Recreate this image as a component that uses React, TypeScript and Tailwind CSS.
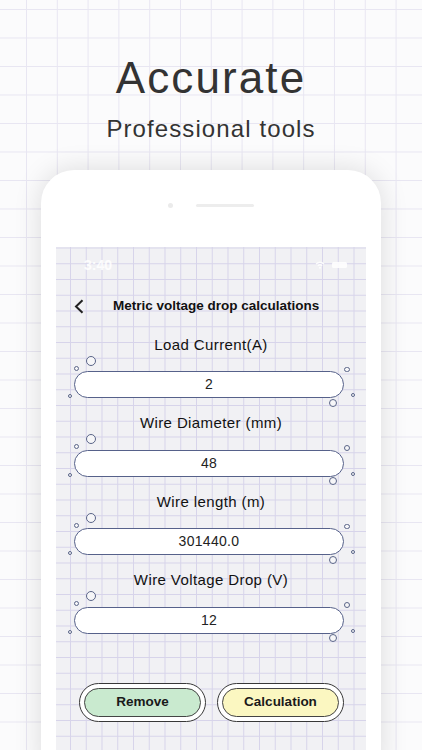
import React from "react";

const fields = [
  { label: "Load Current(A)", value: "2" },
  { label: "Wire Diameter (mm)", value: "48" },
  { label: "Wire length (m)", value: "301440.0" },
  { label: "Wire Voltage Drop (V)", value: "12" },
];

const Bubble = ({ className }: { className: string }) => (
  <span
    className={`absolute rounded-full border border-[#5a6588] bg-[#f6f6f8] ${className}`}
  />
);

const Field = ({ label, value }: { label: string; value: string }) => (
  <div className="flex flex-col mb-[15.5px]">
    <div className="h-[20px] mb-[16px] flex items-center justify-center text-[15px] tracking-[0.4px] text-[#111]">
      {label}
    </div>
    <div className="relative ml-[18px] w-[270px]">
      <div className="h-[27px] rounded-full border-[1.3px] border-[#56618a] bg-white flex items-center justify-center text-[14px] tracking-[0.3px] text-[#222]">
        {value}
      </div>
      <Bubble className="left-[11.5px] top-[-15.5px] w-[10px] h-[10px]" />
      <Bubble className="left-[-0.5px] top-[-5.5px] w-[5px] h-[5px]" />
      <Bubble className="left-[-6px] top-[23px] w-[4px] h-[4px]" />
      <Bubble className="right-[-5.5px] top-[-4.5px] w-[5.5px] h-[5.5px]" />
      <Bubble className="right-[-10.5px] top-[22px] w-[4px] h-[4px]" />
      <Bubble className="right-[7px] top-[27.5px] w-[8px] h-[8px]" />
    </div>
  </div>
);

const PillButton = ({ text, fill }: { text: string; fill: string }) => (
  <div className="w-[127px] h-[39px] rounded-full border-[1.6px] border-[#383838] bg-white p-[4px] flex">
    <div
      className={`flex-1 rounded-full border-[1.4px] border-[#444] ${fill} flex items-center justify-center text-[13.5px] font-bold text-[#1a1a1a]`}
    >
      {text}
    </div>
  </div>
);

export default function App() {
  return (
    <div
      className="relative w-[422px] h-[750px] overflow-hidden bg-[#fbfbfc] bg-[linear-gradient(to_right,#e8e6f2_1px,transparent_1px),linear-gradient(to_bottom,#e8e6f2_1px,transparent_1px)] bg-[size:30.8px_28.5px] bg-[position:26px_9px]"
      style={{ fontFamily: '"Liberation Sans", Arial, sans-serif' }}
    >
      <div className="flex flex-col items-center pt-[56px] text-[#333]">
        <div className="text-[44px] leading-none tracking-[2.1px]">Accurate</div>
        <div className="mt-[16.5px] text-[24px] leading-none tracking-[1.1px]">
          Professional tools
        </div>
      </div>

      <div className="mx-auto mt-[29.5px] w-[340px] h-[600px] rounded-t-[33px] bg-white shadow-[0_0_28px_rgba(0,0,0,0.13)] px-[15px]">
        <div className="h-[77px] flex items-start justify-center pt-[33px]">
          <div className="flex items-center gap-[22.5px]">
            <span className="w-[5px] h-[5px] rounded-full bg-[#ebebeb]" />
            <span className="w-[58px] h-[2.5px] rounded-full bg-[#ededed]" />
          </div>
        </div>

        <div className="h-[510px] bg-[#f1f1f4] bg-[linear-gradient(to_right,#d7d4ea_1px,transparent_1px),linear-gradient(to_bottom,#d7d4ea_1px,transparent_1px)] bg-[size:15.75px_15.75px] bg-[position:14px_0.5px]">
          {/* status bar */}
          <div className="h-[36px] flex items-center justify-between pl-[28px] pr-[19px]">
            <span className="text-[14px] font-semibold text-white/85">3:40</span>
            <div className="flex items-center gap-[7px] opacity-90">
              <svg width="10" height="8" viewBox="0 0 10 8" fill="none">
                <path d="M1 3 Q5 -0.5 9 3" stroke="white" strokeWidth="1.3" />
                <path d="M2.8 4.8 Q5 2.8 7.2 4.8" stroke="white" strokeWidth="1.3" />
                <circle cx="5" cy="6.8" r="1" fill="white" />
              </svg>
              <span className="w-[15px] h-[6px] rounded-[1.5px] bg-white" />
            </div>
          </div>

          {/* nav */}
          <div className="h-[47px] flex items-center pl-[18px]">
            <svg width="10" height="15" viewBox="0 0 10 15" fill="none">
              <path d="M8.5 1.2 L2 7.5 L8.5 13.8" stroke="#222" strokeWidth="2" />
            </svg>
            <span className="ml-[29px] text-[13.5px] font-bold text-[#111]">
              Metric voltage drop calculations
            </span>
          </div>

          <div className="pt-[5px] flex flex-col">
            {fields.map((f) => (
              <Field key={f.label} label={f.label} value={f.value} />
            ))}
          </div>

          <div className="mt-[34px] flex gap-[11px] pl-[23px]">
            <PillButton text="Remove" fill="bg-[#c9eacf]" />
            <PillButton text="Calculation" fill="bg-[#fbf7c1]" />
          </div>
        </div>
      </div>
    </div>
  );
}
